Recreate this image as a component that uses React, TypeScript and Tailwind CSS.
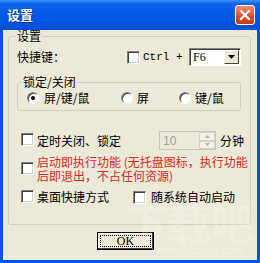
import { FC, ReactNode } from "react"

const Check: FC = () => (
  <span className="inline-block w-[13px] h-[13px] shrink-0 bg-white border border-t-[#808080] border-l-[#808080] border-b-white border-r-white shadow-[inset_1px_1px_0_#404040,inset_-1px_-1px_0_#d4d0c8]" />
)

const Radio: FC<{ on?: boolean }> = ({ on }) => (
  <span className="relative inline-flex items-center justify-center w-[12px] h-[12px] shrink-0 rounded-full bg-white border border-t-[#808080] border-l-[#808080] border-b-white border-r-white shadow-[inset_1px_1px_0_#404040]">
    {on && <span className="w-[4px] h-[4px] rounded-full bg-black" />}
  </span>
)

const Row: FC<{ children: ReactNode; className?: string }> = ({ children, className }) => (
  <div className={`flex items-center ${className ?? ""}`}>{children}</div>
)

export default function App() {
  return (
    <div className="relative w-[260px] h-[263px] flex flex-col bg-[#0052E0] overflow-hidden text-[12px] leading-[14px] text-black font-['Noto_Sans_CJK_SC',sans-serif]">
      {/* title bar */}
      <div className="h-[30px] shrink-0 flex items-center justify-between pl-[7px] pr-[5px] bg-[linear-gradient(to_bottom,#3d95ff_0%,#0f63ea_12%,#0058e8_55%,#004fd8_100%)]">
        <span className="text-white font-bold text-[13px] [text-shadow:1px_1px_0_#0a2f8a]">设置</span>
        <button type="button" className="w-[20px] h-[20px] mb-[1px] flex items-center justify-center rounded-[3px] border border-white bg-[linear-gradient(to_bottom,#f08a6e,#d94a26_60%,#c23a1a)]">
          <svg width="12" height="12" viewBox="0 0 12 12">
            <path d="M2 2 L10 10 M10 2 L2 10" stroke="white" strokeWidth="2.2" strokeLinecap="square" />
          </svg>
        </button>
      </div>

      {/* client area */}
      <div className="flex-1 mx-[3px] mb-[3px] bg-[#ECE9D8] flex flex-col">
        <fieldset className="ml-[5px] w-[243px] border border-[#D0D0BF] rounded-[3px] pl-[7px] pr-0 pb-[20px] pt-0">
          <legend className="px-[1px] leading-[12px]">设置</legend>

          <Row className="mt-[6px] h-[18px]">
            <span className="w-[111px] pl-[1px]">快捷键：</span>
            <Check />
            <span className="ml-[3px] w-[46px] font-['Liberation_Mono',monospace] text-[11px]">Ctrl +</span>
            <div className="w-[52px] h-[18px] flex items-center bg-white border border-t-[#808080] border-l-[#808080] border-b-white border-r-white shadow-[inset_1px_1px_0_#404040]">
              <span className="flex-1 pl-[3px] font-['Liberation_Serif',serif] text-[12px]">F6</span>
              <span className="w-[15px] h-[14px] mr-[1px] flex items-center justify-center bg-[#ECE9D8] border border-t-white border-l-white border-b-[#404040] border-r-[#404040]">
                <svg width="7" height="4" viewBox="0 0 7 4"><path d="M0 0 H7 L3.5 4 Z" fill="black" /></svg>
              </span>
            </div>
          </Row>

          <fieldset className="mt-[10px] ml-[1px] w-[224px] border border-[#D0D0BF] rounded-[3px] pl-[4px] pt-0 pb-[5px]">
            <legend className="px-[1px] leading-[12px]">锁定/关闭</legend>
            <Row className="mt-[3px] h-[14px]">
              <span className="ml-[5px] w-[94px] flex items-center gap-[5px]"><Radio on />屏/键/鼠</span>
              <span className="w-[58px] flex items-center gap-[4px]"><Radio />屏</span>
              <span className="flex items-center gap-[4px]"><Radio />键/鼠</span>
            </Row>
          </fieldset>

          <Row className="mt-[20px] h-[19px]">
            <span className="ml-[5px] w-[16px]"><Check /></span>
            <span className="w-[122px]">定时关闭、锁定</span>
            <div className="w-[57px] h-[19px] flex bg-[#ECE9D8] border border-[#C9C7BA]">
              <span className="flex-1 pl-[3px] pt-[2px] text-[#A0A0A0] font-['Liberation_Sans',sans-serif]">10</span>
              <span className="w-[16px] flex flex-col">
                <span className="flex-1 border border-[#D6D3C6] bg-[#F2F0E6] flex items-center justify-center">
                  <svg width="5" height="3" viewBox="0 0 5 3"><path d="M2.5 0 L5 3 H0 Z" fill="#B8B6AA" /></svg>
                </span>
                <span className="flex-1 border border-[#D6D3C6] bg-[#F2F0E6] flex items-center justify-center">
                  <svg width="5" height="3" viewBox="0 0 5 3"><path d="M0 0 H5 L2.5 3 Z" fill="#B8B6AA" /></svg>
                </span>
              </span>
            </div>
            <span className="ml-[4px]">分钟</span>
          </Row>

          <Row className="mt-[5px]">
            <span className="ml-[5px] w-[16px] pt-[1px]"><Check /></span>
            <span className="text-[#E0281C] whitespace-nowrap leading-[14px]">
              启动即执行功能 (无托盘图标，执行功能<br />后即退出，不占任何资源)
            </span>
          </Row>

          <Row className="mt-[7px] h-[14px]">
            <span className="ml-[5px] w-[16px]"><Check /></span>
            <span className="w-[96px]">桌面快捷方式</span>
            <Check />
            <span className="ml-[5px]">随系统自动启动</span>
          </Row>
        </fieldset>

        <div className="mt-[7px] ml-[94px]">
          <button type="button" className="w-[57px] h-[18px] p-[2px] bg-[#ECE9D8] border border-black shadow-[inset_-1px_-1px_0_#404040,inset_1px_1px_0_#fff]">
            <span className="flex h-full items-center justify-center border border-dotted border-black font-['Liberation_Serif',serif] text-[12px] leading-none">OK</span>
          </button>
        </div>
      </div>

      {/* watermark */}
      <div className="pointer-events-none absolute left-[124px] top-[200px] text-[44px] leading-[44px] font-bold text-white/20 tracking-[-1px]">下载吧</div>
      <div className="pointer-events-none absolute left-[152px] top-[244px] text-[11px] leading-[12px] font-['Liberation_Sans',sans-serif] text-white/30">www.xiazaiba.com</div>
    </div>
  )
}
